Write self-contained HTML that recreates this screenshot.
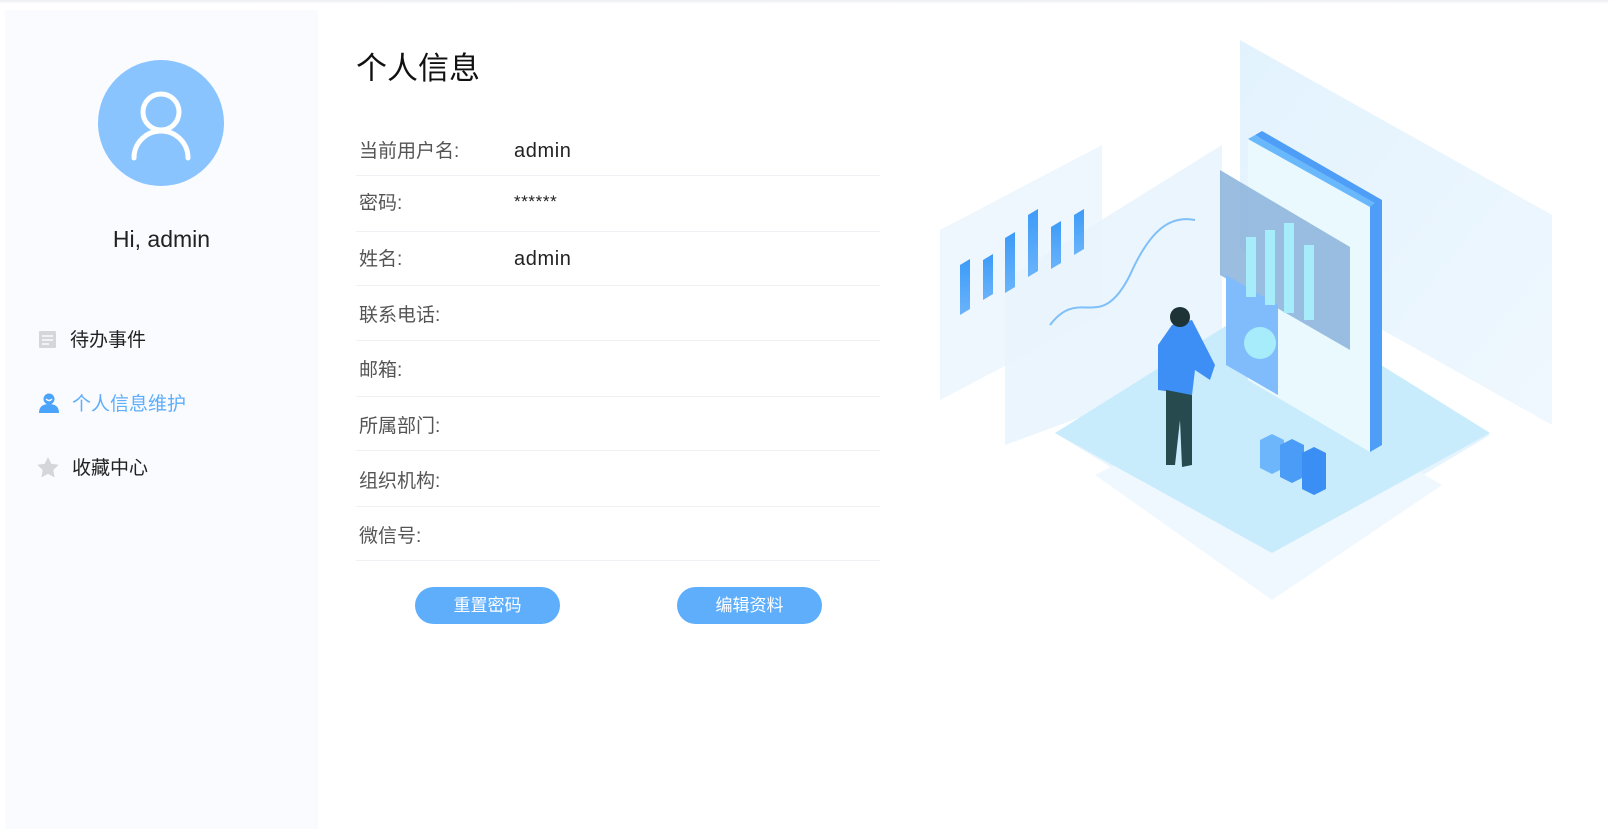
<!DOCTYPE html>
<html><head><meta charset="utf-8"><style>
*{margin:0;padding:0;box-sizing:border-box}
body{width:1608px;height:836px;background:#fff;position:relative;overflow:hidden;font-family:"Liberation Sans","Noto Sans CJK SC",sans-serif;}
.top{position:absolute;left:0;top:0;width:1608px;height:4px;background:linear-gradient(#eceef2,#fff)}
.side{position:absolute;left:5px;top:10px;width:313px;height:819px;background:#f9fbff}
.av{position:absolute;left:93px;top:50px;width:126px;height:126px;border-radius:50%;background:#8ac4ff}
.hi{position:absolute;left:0;width:313px;top:216px;text-align:center;font-size:23px;color:#222}
.menu{position:absolute;left:38px;font-size:19px;color:#222;display:flex;align-items:center}
.menu svg{margin-right:12px}
h1{position:absolute;left:356px;top:43px;font-size:31px;font-weight:normal;color:#111}
.row{position:absolute;left:356px;width:524px;border-bottom:1px solid #eef0f3;font-size:19px}
.row .l{position:absolute;left:3px;color:#555}
.row .v{position:absolute;left:158px;color:#222;font-size:20px;letter-spacing:.6px}
.btn{position:absolute;top:587px;width:145px;height:37px;border-radius:19px;background:#5eaefc;color:#fff;font-size:17px;text-align:center;line-height:37px}
</style></head><body>
<div class="top"></div>
<div class="side">
<div class="av"><svg width="126" height="126" viewBox="0 0 126 126"><circle cx="63" cy="52" r="18" fill="none" stroke="#fff" stroke-width="5"/><path d="M36 98 A27 27 0 0 1 90 98" fill="none" stroke="#fff" stroke-width="5" stroke-linecap="round"/></svg></div>
<div class="hi">Hi, admin</div>
<div class="menu" style="top:315px;left:33px"><svg width="20" height="20" viewBox="0 0 20 20"><rect x="1" y="2" width="17" height="17" rx="1" fill="#d4d6da"/><path d="M4 7h11M4 11h11M4 15h7" stroke="#f9fbff" stroke-width="1.5"/></svg>待办事件</div>
<div class="menu" style="top:379px;left:33px;color:#5eaefc"><svg width="22" height="20" viewBox="0 0 22 20"><circle cx="11" cy="6" r="5.5" fill="#4ba3fb"/><path d="M1 20 Q1 11 11 11 Q21 11 21 20Z" fill="#4ba3fb"/><path d="M8 6 Q11 9 14 6" stroke="#fff" fill="none" stroke-width="1.3"/></svg>个人信息维护</div>
<div class="menu" style="top:443px;left:31px"><svg width="24" height="22" viewBox="0 0 24 22"><path d="M12 1l3.3 6.8 7.4 1-5.4 5.2 1.3 7.4L12 17.9 5.4 21.4l1.3-7.4L1.3 8.8l7.4-1z" fill="#d4d6da"/></svg>收藏中心</div>
</div>
<h1>个人信息</h1>
<div class="row" style="top:130px;height:46px"><span class="l" style="top:6px">当前用户名:</span><span class="v" style="top:10px">admin</span></div>
<div class="row" style="top:176px;height:56px"><span class="l" style="top:12px">密码:</span><span class="v" style="top:16px;font-size:17px">******</span></div>
<div class="row" style="top:232px;height:54px"><span class="l" style="top:12px">姓名:</span><span class="v" style="top:16px">admin</span></div>
<div class="row" style="top:286px;height:55px"><span class="l" style="top:14px">联系电话:</span></div>
<div class="row" style="top:341px;height:56px"><span class="l" style="top:14px">邮箱:</span></div>
<div class="row" style="top:397px;height:54px"><span class="l" style="top:14px">所属部门:</span></div>
<div class="row" style="top:451px;height:56px"><span class="l" style="top:15px">组织机构:</span></div>
<div class="row" style="top:507px;height:54px"><span class="l" style="top:14px">微信号:</span></div>
<div class="btn" style="left:415px">重置密码</div>
<div class="btn" style="left:677px">编辑资料</div>
<svg style="position:absolute;left:930px;top:35px" width="630" height="575" viewBox="0 0 630 575">
<defs><linearGradient id="g1" x1="0" y1="0" x2="1" y2="1"><stop offset="0" stop-color="#dff1fd"/><stop offset="1" stop-color="#eef7fe"/></linearGradient>
<linearGradient id="bar" x1="0" y1="0" x2="0" y2="1"><stop offset="0" stop-color="#3d9bf7"/><stop offset="1" stop-color="#6ab3fb"/></linearGradient></defs>
<path d="M310 5 L622 180 L622 390 L310 215Z" fill="url(#g1)" opacity=".9"/>
<path d="M10 195 L172 110 L172 280 L10 365Z" fill="#eef6fe"/>
<path d="M75 245 L292 110 L292 330 L75 410Z" fill="#e8f4fd" opacity=".9"/>
<path d="M125 398 L342 270 L560 400 L342 530Z" fill="#e6f4fd"/>
<path d="M165 440 L342 350 L512 450 L342 565Z" fill="#eef8fe"/>
<path d="M125 398 L342 262 L560 398 L342 518Z" fill="#c9ecfd"/>
<path d="M120 290 C150 250,170 300,200 240 C220 195,240 180,265 185" fill="none" stroke="#7fc0f8" stroke-width="2"/>
<g fill="url(#bar)"><path d="M30 230l10-6v50l-10 6z"/><path d="M53 225l10-6v40l-10 6z"/><path d="M75 203l10-6v55l-10 6z"/><path d="M98 180l10-6v62l-10 6z"/><path d="M121 192l10-6v42l-10 6z"/><path d="M144 180l10-6v40l-10 6z"/></g>
<path d="M325 100 L332 96 L452 165 L452 410 L440 417 L440 172Z" fill="#4e9ef8"/>
<path d="M318 104 L325 100 L440 172 L440 417 L318 345Z" fill="#eaf9fe"/>
<path d="M318 104 L325 100 L445 168 L440 172Z" fill="#6ab8fc"/>
<path d="M290 135 L420 212 L420 315 L290 240Z" fill="#8fb6dd" opacity=".9"/>
<path d="M296 240 L348 270 L348 360 L296 330Z" fill="#80bcfb"/>
<g fill="#a7ecfb"><path d="M316 202h10v60h-10z"/><path d="M335 195h10v75h-10z"/><path d="M354 188h10v90h-10z"/><path d="M374 210h10v75h-10z"/></g>
<circle cx="330" cy="308" r="16" fill="#a7ecfb"/>
<path d="M242 290 L262 285 L285 330 L280 345 L265 335 L262 360 L228 355 L228 310Z" fill="#3d8ff5"/>
<path d="M236 355 L262 360 L262 430 L252 432 L250 385 L245 430 L236 430Z" fill="#264a4e"/>
<circle cx="250" cy="282" r="10" fill="#1e3335"/>
<path d="M330 405l12-6 12 6v28l-12 6-12-6z" fill="#6eb6fb"/><path d="M350 410l12-6 12 6v32l-12 6-12-6z" fill="#4a9cf7"/><path d="M372 418l12-6 12 6v36l-12 6-12-6z" fill="#3a8ef4"/>
</svg>
</body></html>
